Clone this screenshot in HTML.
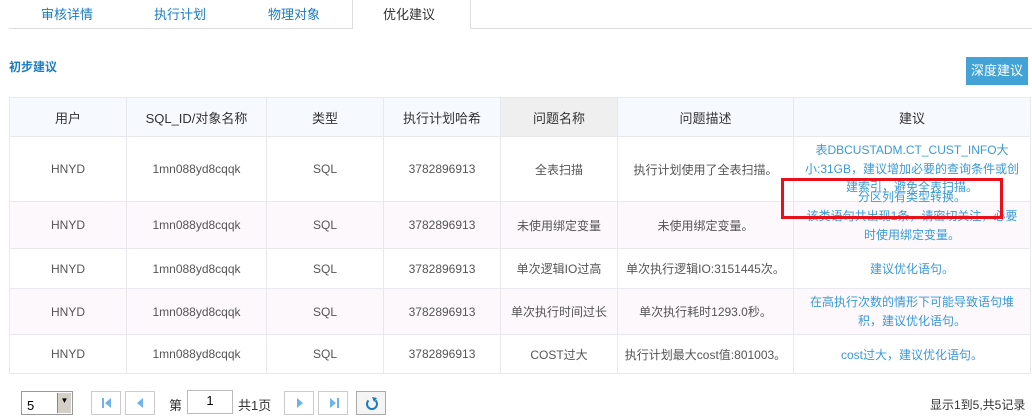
<!DOCTYPE html>
<html><head><meta charset="utf-8"><style>
*{margin:0;padding:0;box-sizing:border-box}
body{width:1032px;height:411px;overflow:hidden;background:#fff;font-family:"Liberation Sans","Noto Sans CJK SC",sans-serif;font-size:12px;color:#555;position:relative}
.a{position:absolute;white-space:nowrap}
.tab{position:absolute;top:4px;font-size:13px;color:#1a7bc0}
table{position:absolute;left:9px;top:97px;border-collapse:collapse;table-layout:fixed}
td,th{border:1px solid #e8e8ee;text-align:center;font-weight:normal;vertical-align:middle}
th{background:#f6f9fd;color:#333;font-size:13px;height:39px}
.p{background:#fcf8fc}
.s{color:#3a9ad6}
.pb{position:absolute;top:391px;width:30px;height:24px;border:1px solid #ccc;background:#fff}
.pb svg{position:absolute;left:0;top:0}
</style></head><body>
<div class="a" style="left:9px;top:28px;width:343px;border-top:1px solid #ddd"></div>
<div class="a" style="left:470px;top:28px;width:562px;border-top:1px solid #ddd"></div>
<div class="a" style="left:352px;top:0;width:119px;height:29px;border-left:1px solid #ddd;border-right:1px solid #ddd"></div>
<div class="tab" style="left:41px">审核详情</div>
<div class="tab" style="left:154px">执行计划</div>
<div class="tab" style="left:268px">物理对象</div>
<div class="tab" style="left:383px;color:#333">优化建议</div>
<div class="a" style="left:9px;top:58px;color:#1a7bc0;font-weight:bold;font-size:12px">初步建议</div>
<div class="a" style="left:966px;top:57px;width:62px;height:28px;background:#43a3d6;color:#fff;font-size:13px;line-height:28px;text-align:center">深度建议</div>
<table>
<colgroup><col style="width:117px"><col style="width:140px"><col style="width:117px"><col style="width:117px"><col style="width:117px"><col style="width:176px"><col style="width:237px"></colgroup>
<tr><th>用户</th><th>SQL_ID/对象名称</th><th>类型</th><th>执行计划哈希</th><th style="background:#efefef">问题名称</th><th>问题描述</th><th>建议</th></tr>
<tr style="height:65px"><td>HNYD</td><td>1mn088yd8cqqk</td><td>SQL</td><td>3782896913</td><td>全表扫描</td><td>执行计划使用了全表扫描。</td><td></td></tr>
<tr class="p" style="height:47px"><td>HNYD</td><td>1mn088yd8cqqk</td><td>SQL</td><td>3782896913</td><td>未使用绑定变量</td><td>未使用绑定变量。</td><td></td></tr>
<tr style="height:40px"><td>HNYD</td><td>1mn088yd8cqqk</td><td>SQL</td><td>3782896913</td><td>单次逻辑IO过高</td><td>单次执行逻辑IO:3151445次。</td><td class="s">建议优化语句。</td></tr>
<tr class="p" style="height:46px"><td>HNYD</td><td>1mn088yd8cqqk</td><td>SQL</td><td>3782896913</td><td>单次执行时间过长</td><td>单次执行耗时1293.0秒。</td><td class="s" style="line-height:19px">在高执行次数的情形下可能导致语句堆<br>积，建议优化语句。</td></tr>
<tr style="height:39px"><td>HNYD</td><td>1mn088yd8cqqk</td><td>SQL</td><td>3782896913</td><td>COST过大</td><td>执行计划最大cost值:801003。</td><td class="s">cost过大，建议优化语句。</td></tr>
</table>
<div class="a s" style="left:802px;top:141px;width:220px;text-align:center;line-height:18.5px;white-space:normal">表DBCUSTADM.CT_CUST_INFO大小:31GB，建议增加必要的查询条件或创建索引，避免全表扫描。</div>
<div class="a s" style="left:802px;top:188px;width:220px;text-align:center">分区列有类型转换。</div>
<div class="a s" style="left:802px;top:207px;width:220px;text-align:center;line-height:18.5px">该类语句共出现1条，请密切关注，必要<br>时使用绑定变量。</div>
<div class="a" style="left:781px;top:178px;width:222px;height:41px;border:3px solid #e8101a"></div>
<div class="a" style="left:21px;top:391px;width:52px;height:24px;border:1px solid #999;background:#fff"><span style="position:absolute;left:5px;top:6px;font-size:13px;color:#000">5</span><span style="position:absolute;right:1px;top:1px;width:14px;height:20px;background:#d4d0c8;border-left:1px solid #888;font-size:8px;text-align:center;line-height:16px;color:#000">▼</span></div>
<div class="pb" style="left:91px"><svg width="30" height="24"><rect x="10" y="6" width="2" height="10" fill="#6cb4ea"/><path d="M19 6 L13 11 L19 16Z" fill="#6cb4ea"/></svg></div>
<div class="pb" style="left:125px"><svg width="30" height="24"><path d="M17 6 L11 11 L17 16Z" fill="#6cb4ea"/></svg></div>
<div class="a" style="left:169px;top:395px;font-size:13px;color:#333">第</div>
<div class="a" style="left:187px;top:390px;width:46px;height:24px;border:1px solid #bbb;text-align:center;line-height:20px;font-size:13px;color:#000">1</div>
<div class="a" style="left:238px;top:395px;font-size:13px;color:#333">共1页</div>
<div class="pb" style="left:284px"><svg width="30" height="24"><path d="M12 6 L18 11 L12 16Z" fill="#6cb4ea"/></svg></div>
<div class="pb" style="left:318px"><svg width="30" height="24"><path d="M11 6 L17 11 L11 16Z" fill="#6cb4ea"/><rect x="18" y="6" width="2" height="10" fill="#6cb4ea"/></svg></div>
<div class="pb" style="left:356px;border-color:#aaa;background:#f4f4f4"><svg width="30" height="24"><path d="M18.5 8.5 A5 5 0 1 1 11.5 8.5" fill="none" stroke="#1a7bc0" stroke-width="2"/><path d="M15 5 L20 6 L17 10Z" fill="#1a7bc0"/></svg></div>
<div class="a" style="left:930px;top:396px;color:#333">显示1到5,共5记录</div>
</body></html>
